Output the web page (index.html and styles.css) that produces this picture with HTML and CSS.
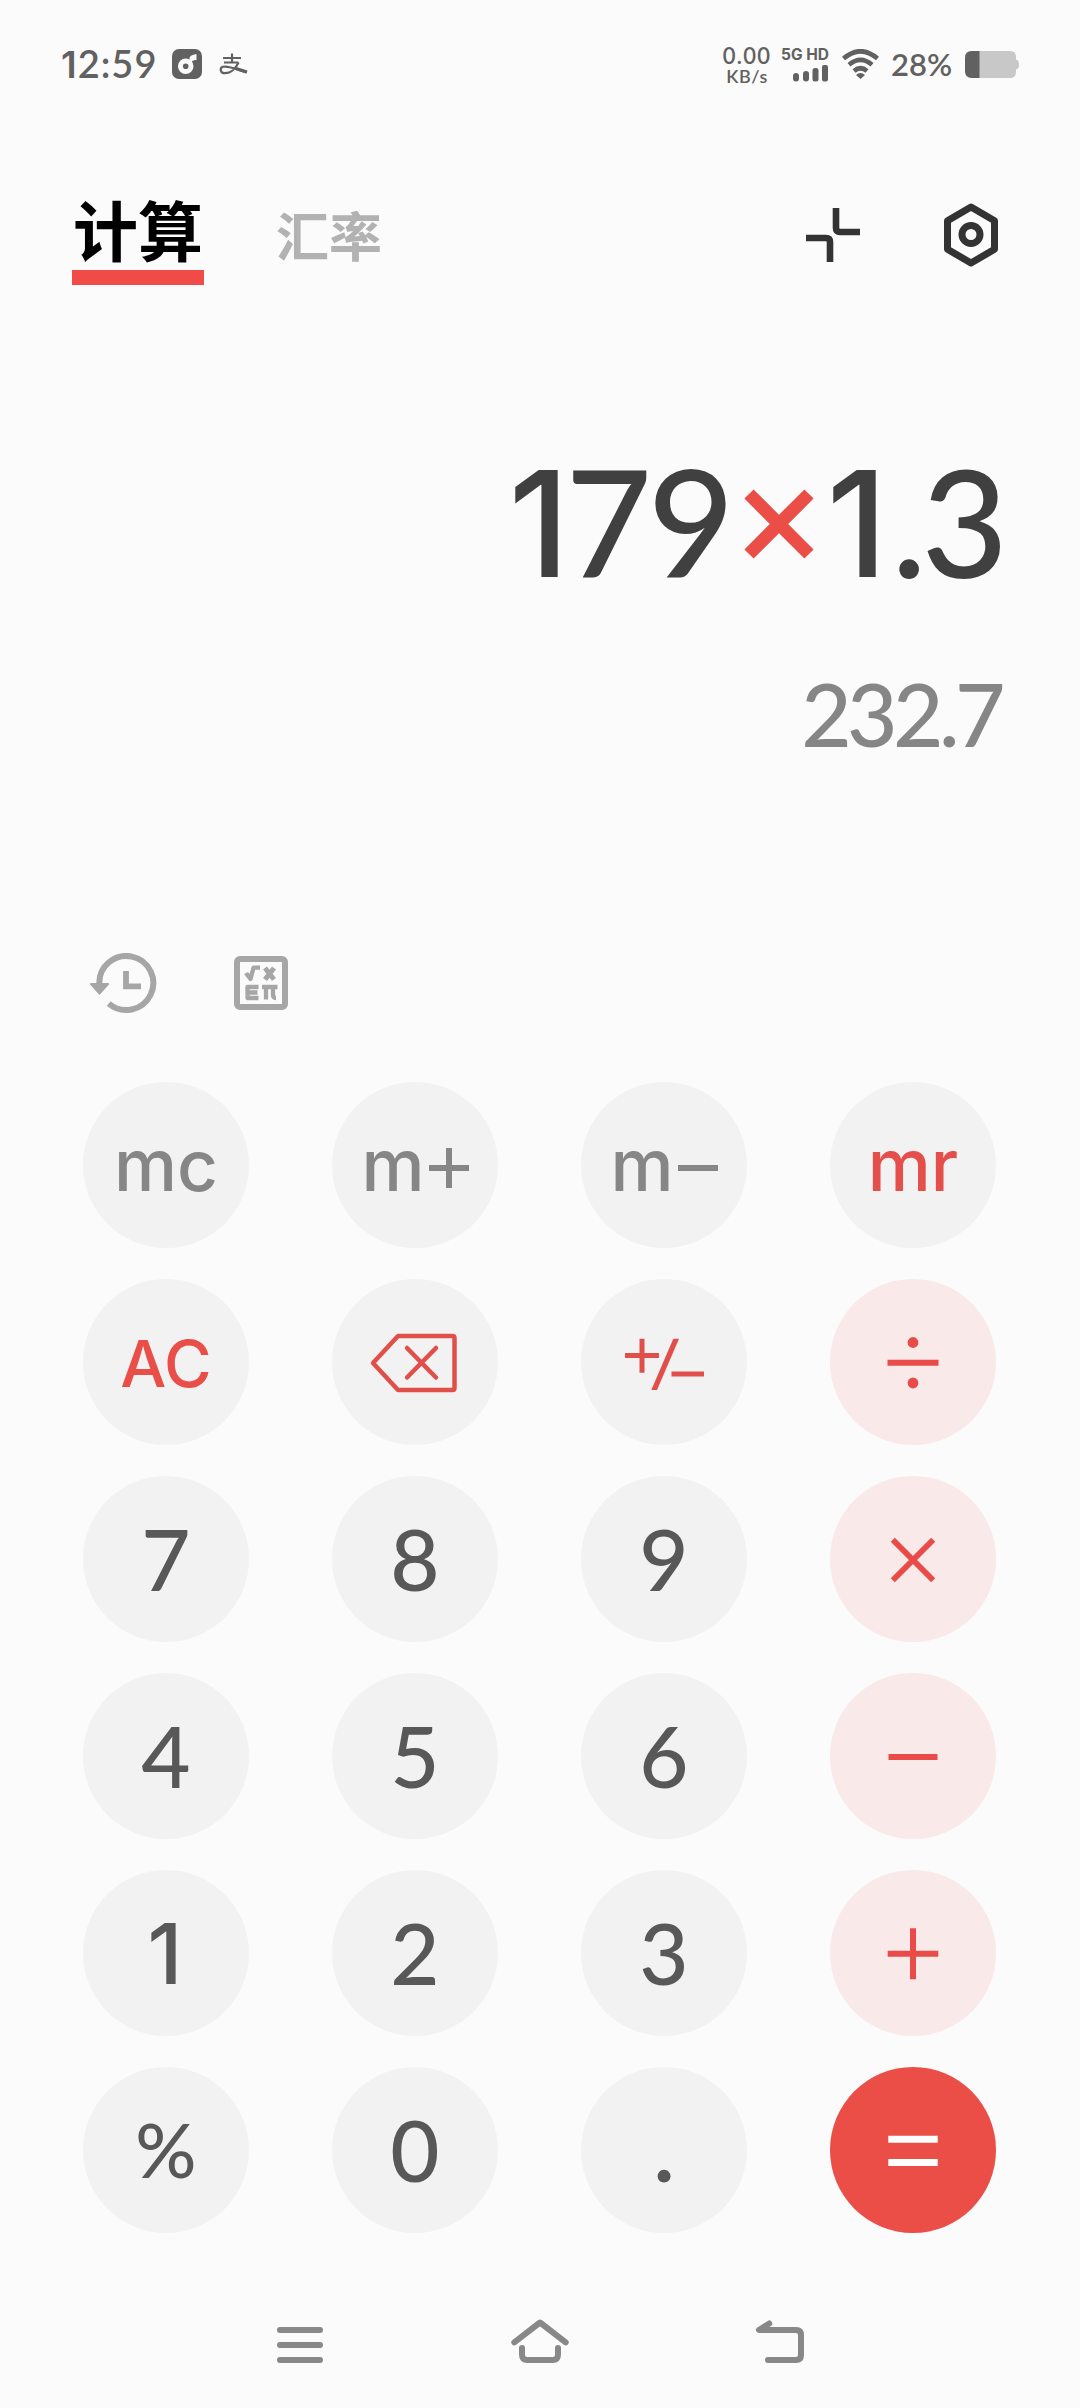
FILE: index.html
```html
<!DOCTYPE html>
<html lang="zh-CN">
<head>
<meta charset="utf-8">
<title>计算器</title>
<link rel="stylesheet" href="styles.css">
</head>
<body>
<header class="status">
  <span class="clock"><span class="one">1</span>2:59</span>
  <svg class="app-music" width="30" height="30" viewBox="0 0 30 30"><rect width="30" height="30" rx="7" fill="#616161"/><circle cx="13.700" cy="17.200" r="5.300" fill="none" stroke="#fbfbfb" stroke-width="5"/><path d="M18.500 17V9.200q0-2 5-3V10q-2.500 0-3 1.500" fill="#fbfbfb" stroke="#fbfbfb" stroke-width="2"/></svg>
  <svg class="app-pay" width="30" height="22" viewBox="0 0 30 22" fill="none" stroke="#616161"><path d="M4 5H22M13 .5V9.500M5 9.500H19.500" stroke-width="2.200"/><path d="M19.500 9.500C17 15 12 20.200 6 20.200C1 20.200 .5 15 4 13.800C10 12.300 15 16 27.500 19.500" stroke-width="2.200"/><path d="M17 15.500L28 19" stroke-width="3.400"/></svg>
  <span class="spacer"></span>
  <span class="speed"><b>0.00</b><b>KB/s</b></span>
  <span class="network"><b>5G HD</b>
    <svg width="36" height="17" viewBox="0 0 36 17" fill="#616161"><rect y="8" width="6" height="8.500" rx="3"/><rect x="10" y="6" width="6" height="10.500" rx="3"/><rect x="19.500" y="3" width="6" height="13.500" rx="2.500"/><rect x="29" width="6" height="16.500" rx="2"/></svg>
  </span>
  <svg class="wifi" width="37" height="30" viewBox="0 0 37 30" fill="none" stroke="#616161" stroke-width="4.600"><path d="M1.500 9.500Q18.500-5 35.500 9.500M7 15.800Q18.500 6 30 15.800M12 22Q18.500 16.500 25 22"/><path d="M14 26Q18.500 22 23 26L18.500 30Z" fill="#616161" stroke="none"/></svg>
  <span class="percent">28%</span>
  <svg class="battery" width="54" height="27" viewBox="0 0 54 27"><path d="M7 0H45Q51 0 51 6V8.500Q54 9 54 13.500T51 18.500V21Q51 27 45 27H7Q0 27 0 20V7Q0 0 7 0Z" fill="#c8c8c8"/><path d="M14.500 0H7Q0 0 0 7V20Q0 27 7 27H14.500Z" fill="#616161"/></svg>
</header>

<nav class="tabs">
  <a class="tab tab-active">计算</a>
  <a class="tab">汇率</a>
  <span class="spacer"></span>
  <svg class="collapse" width="54" height="54" viewBox="0 0 54 54" fill="none" stroke="#333" stroke-width="6.600" stroke-linecap="butt"><path d="M30 0V20Q30 24 34 24H54M0 30H20Q24 30 24 34V54"/></svg>
  <svg class="settings" width="56" height="64" viewBox="0 0 56 64" fill="none" stroke="#333" stroke-width="7" stroke-linejoin="round"><path d="M28 4L51.500 17.700V46.300L28 60L4.500 46.300V17.700Z"/><circle cx="28" cy="31.500" r="9"/></svg>
</nav>

<main>
  <section class="display">
    <div class="expression"><span class="one">1</span><span class="digits"><span class="seven">7</span>9</span><svg class="times" width="70" height="70" viewBox="0 0 70 70" stroke="#eb4d47" stroke-width="13"><path d="M5 5L65 65M65 5L5 65"/></svg><span class="one one-last">1</span><span class="digits">.3</span></div>
    <div class="result">232.7</div>
  </section>

  <section class="tools">
    <svg width="68" height="62" viewBox="0 0 68 62"><path d="M9.300 32V31A27 27 0 1 1 18.700 50.500" fill="none" stroke="#a6a6a6" stroke-width="6"/><path d="M1 31H18L9.500 40.500Z" fill="#a6a6a6" stroke="#a6a6a6" stroke-width="2" stroke-linejoin="round"/><path d="M36 18V33.300H51" fill="none" stroke="#a6a6a6" stroke-width="5.800"/></svg>
    <svg width="54" height="54" viewBox="0 0 54 54" fill="none" stroke="#a6a6a6" stroke-width="4.300" stroke-linejoin="round"><rect x="3" y="3" width="48" height="48" rx="3" stroke-width="6"/><path d="M11.500 20L13.500 18.500L16.500 23L19.500 11.700H26"/><path d="M31 12L40 23.500M40 12L31 23.500" stroke-width="5"/><path d="M24.500 31H13.500V42H24.500M13.500 36.500H23.500M28 31H43.500M32 31V43.500M39 31V39Q39 42 42 42"/></svg>
  </section>

  <section class="keypad">
    <button class="key memory">mc</button>
    <button class="key memory">m<svg width="40" height="40" viewBox="0 0 40 40"><path d="M0 20H40M20 0V40"/></svg></button>
    <button class="key memory">m<svg width="40" height="40" viewBox="0 0 40 40"><path d="M0 20H40"/></svg></button>
    <button class="key memory red">mr</button>

    <button class="key clear">AC</button>
    <button class="key icon"><svg width="100" height="100" viewBox="-50 -50 100 100" fill="none" stroke="#e14f4b" stroke-width="4.500" stroke-linejoin="round" stroke-linecap="round"><path d="M-17-26H37.500Q39.500-26 39.500-24V26Q39.500 28 37.500 28H-17L-42 1Z"/><path d="M-8-14L21 15.500M21-14L-8 15.500"/></svg></button>
    <button class="key icon"><svg width="100" height="100" viewBox="-50 -50 100 100" fill="none" stroke="#e14f4b" stroke-width="5"><path d="M-39-6.500H-5M-22-23.300V10.800M7.500 12H40"/><path d="M-12.700 27.900H-7L15-23.200H9.300Z" fill="#e14f4b" stroke="none"/></svg></button>
    <button class="key icon tint"><svg width="100" height="100" viewBox="-50 -50 100 100" stroke="#e94c48" stroke-width="6"><path d="M-25.500 .7H25.500"/><circle cy="-19.500" r="5.400" fill="#e94c48" stroke="none"/><circle cy="21" r="5.400" fill="#e94c48" stroke="none"/></svg></button>

    <button class="key">7</button>
    <button class="key">8</button>
    <button class="key">9</button>
    <button class="key icon tint"><svg width="100" height="100" viewBox="-50 -50 100 100" stroke="#e94c48" stroke-width="5.800"><path d="M-20.200-19.200L20.200 21.200M20.200-19.200L-20.200 21.200"/></svg></button>

    <button class="key">4</button>
    <button class="key">5</button>
    <button class="key">6</button>
    <button class="key icon tint"><svg width="100" height="100" viewBox="-50 -50 100 100" stroke="#e94c48" stroke-width="6"><path d="M-24.500 1H24.500"/></svg></button>

    <button class="key key-one">1</button>
    <button class="key">2</button>
    <button class="key">3</button>
    <button class="key icon tint"><svg width="100" height="100" viewBox="-50 -50 100 100" stroke="#e94c48" stroke-width="6"><path d="M-25.300 .8H25.300M0-24.700V26.300"/></svg></button>

    <button class="key mod">%</button>
    <button class="key">0</button>
    <button class="key point">.</button>
    <button class="key icon equals"><svg width="100" height="100" viewBox="-50 -50 100 100" stroke="#fff" stroke-width="7"><path d="M-24.700-10.700H24.700M-24.700 12.500H24.700"/></svg></button>
  </section>
</main>

<footer class="navbar">
  <svg width="60" height="60" viewBox="0 0 60 60"><path d="M10 15H50M10 30H50M10 45H50" /></svg>
  <svg width="60" height="60" viewBox="0 0 60 60"><path d="M4.300 27.300L30 7.500L55.700 27.300M12 33V39.500Q12 45 17.500 45H42.500Q48 45 48 39.500V33"/></svg>
  <svg width="60" height="60" viewBox="0 0 60 60"><path d="M19.300 8.500L9 15H46Q51 15 51 20V40Q51 45 46 45H18"/></svg>
</footer>
</body>
</html>
```

FILE: styles.css
```css
* { box-sizing: border-box; }

body {
  margin: 0;
  width: 1080px;
  height: 2408px;
  display: flex;
  flex-direction: column;
  background: #fbfbfb;
  font-family: Lato, "Noto Sans CJK SC", sans-serif;
  font-weight: 500;
  color: #585858;
}

svg { display: block; flex: none; }
.spacer { flex: 1; }
.one { font-family: Inter, sans-serif; }

/* Status bar */
.status {
  height: 128px;
  padding: 0 61px 0 61px;
  display: flex;
  align-items: center;
  color: #616161;
}
.clock { width: 111px; font-size: 38px; font-weight: 600; line-height: 40px; letter-spacing: 1px; white-space: nowrap; }
.clock .one { font-size: 37px; }
.app-pay { margin-left: 17px; }
.speed { display: flex; flex-direction: column; align-items: center; width: 52px; margin-right: 8px; }
.speed b { font-size: 18px; line-height: 18px; font-weight: 600; letter-spacing: .6px; }
.speed b:first-child { font-size: 22px; line-height: 23px; letter-spacing: 1.2px; }
.network { display: flex; flex-direction: column; align-items: flex-end; gap: 2px; margin-right: 13px; }
.network b { font: 700 15.500px/16px Inter, sans-serif; white-space: nowrap; }
.percent { width: 86px; padding-left: 12px; font-size: 31px; font-weight: 600; white-space: nowrap; }

/* Tabs */
.tabs { height: 292px; padding: 62px 81px 0 72px; display: flex; align-items: flex-start; }
.tab { font-size: 53px; font-weight: 700; line-height: 60px; color: #b2b2b2; margin: 17px 0 0 72px; }
.tab-active { width: 132px; height: 95px; margin: 0; padding: 0 0 0 1px; border-bottom: 15px solid #f04b46; font-size: 65px; line-height: 83px; color: #000; white-space: nowrap; }
.collapse { margin: 18px 83px 0 0; }
.settings { margin-top: 13px; }

/* Display */
.display { height: 530px; padding: 0 74px; }
.expression { display: flex; justify-content: flex-end; align-items: center; height: 208px; padding-right: 3px; font-size: 149px; line-height: 208px; color: #404040; }
.expression .one { font-size: 147px; margin-right: -4px; }
.expression .one-last { margin-right: 4px; }
.digits { letter-spacing: -5px; margin-top: -6px; }
.seven { letter-spacing: -4px; }
.times { margin: 0 12px 0 15px; }
.result { font-size: 87px; line-height: 100px; margin: 36px 5px 0 0; text-align: right; letter-spacing: -4.500px; color: #868686; }

/* Tools */
.tools { height: 132px; padding-left: 90px; display: flex; align-items: flex-start; gap: 76px; }
.tools svg { margin-top: 6px; }
.tools svg:first-child { margin-top: 3px; }

/* Keypad */
.keypad {
  display: grid;
  grid-template-columns: repeat(4, 166px);
  grid-auto-rows: 166px;
  gap: 31px 83px;
  padding-left: 83px;
}
.key {
  display: flex;
  align-items: center;
  justify-content: center;
  padding: 0 0 3px;
  border: 0;
  border-radius: 50%;
  background: #f2f2f2;
  color: #585858;
  font: 500 85px/160px Lato, sans-serif;
}
.icon { padding: 0; }
.key-one { padding: 2px 2px 0 0; font-family: Inter, sans-serif; font-size: 84px; }
.memory { padding: 0; font: 450 71px/164px Inter, sans-serif; color: #868686; }
.memory svg { stroke: #868686; stroke-width: 6; margin: 6px 0 0 4px; }
.clear { padding: 4px 0 0; font: 500 65px/160px Inter, sans-serif; color: #ea4e48; }
.red { color: #e44f4b; }
.mod { font-size: 76px; }
.point { font-weight: 700; }
.tint { background: #f9e9e9; }
.equals { background: #eb4d47; }

/* System navigation */
.navbar { display: flex; justify-content: center; gap: 180px; padding-top: 82px; }
.navbar svg { fill: none; stroke: #888; stroke-width: 6; stroke-linecap: round; stroke-linejoin: round; }
```
